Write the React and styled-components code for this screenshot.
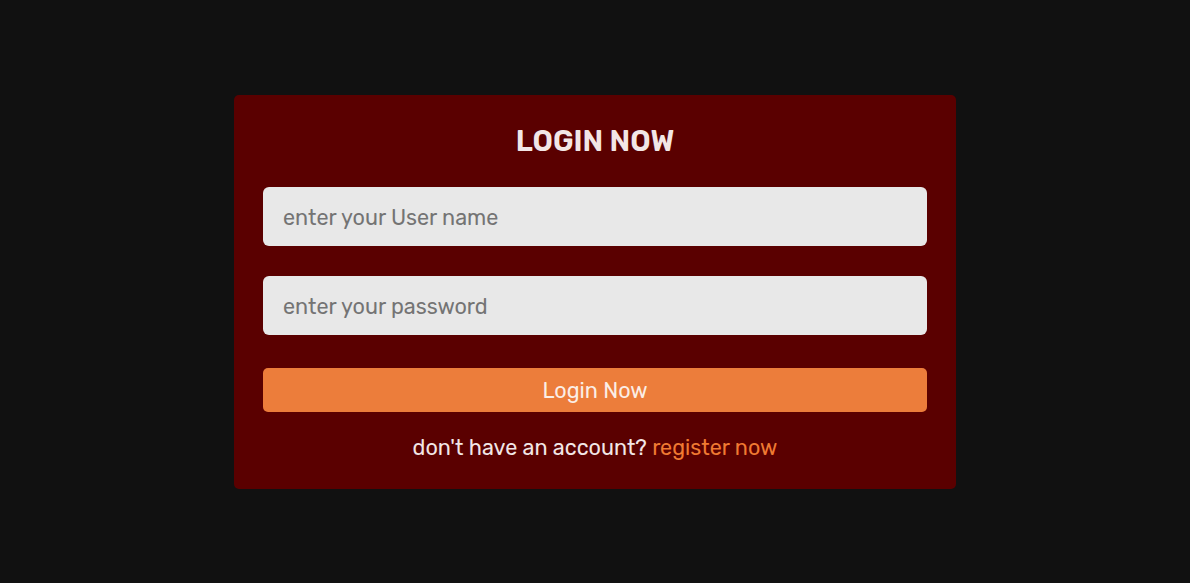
import styled, { createGlobalStyle } from 'styled-components';

const GlobalStyle = createGlobalStyle`
  html, body, #root {
    margin: 0;
    height: 100%;
  }
  body {
    background: #111111;
    font-family: Rubik, "Noto Sans", "Open Sans", sans-serif;
  }
`;

export default function App() {
  return (
    <>
      <GlobalStyle />
      <Page>
        <LoginForm onSubmit={(e) => e.preventDefault()}>
          <Title>LOGIN NOW</Title>
          <Field type="text" placeholder="enter your User name" />
          <Field type="password" placeholder="enter your password" />
          <SubmitButton type="submit">Login Now</SubmitButton>
          <Footer>
            don't have an account? <RegisterLink href="#">register now</RegisterLink>
          </Footer>
        </LoginForm>
      </Page>
    </>
  );
}

const Page = styled.div`
  min-height: 100%;
  display: flex;
  align-items: center;
  justify-content: center;
`;
const LoginForm = styled.form`
  width: 722px;
  box-sizing: border-box;
  padding: 28px 29px 28px;
  background-color: #5a0000;
  border-radius: 5px;
  display: flex;
  flex-direction: column;
`;
const Title = styled.h3`
  margin: 0 0 27px;
  text-align: center;
  font-size: 29px;
  line-height: 37px;
  font-weight: 600;
  color: #f2e6e6;
`;
const Field = styled.input`
  height: 59px;
  box-sizing: border-box;
  padding: 2px 20px 0;
  border: none;
  border-radius: 6px;
  background: #e8e8e8;
  font-family: inherit;
  font-size: 21.6px;
  color: #333;
  outline: none;
  & + & {
    margin-top: 30px;
  }
  &::placeholder {
    color: #747474;
  }
`;
const SubmitButton = styled.button`
  margin-top: 33px;
  height: 44px;
  padding: 2px 0 0;
  border: none;
  border-radius: 5px;
  background: #ec7d3b;
  color: #fbeee6;
  font-family: inherit;
  font-size: 21.6px;
  cursor: pointer;
`;
const Footer = styled.p`
  margin: 23px 0 0;
  text-align: center;
  font-size: 21.6px;
  line-height: 26px;
  color: #f2e6e6;
`;
const RegisterLink = styled.a`
  color: #f07a32;
  text-decoration: none;
`;
